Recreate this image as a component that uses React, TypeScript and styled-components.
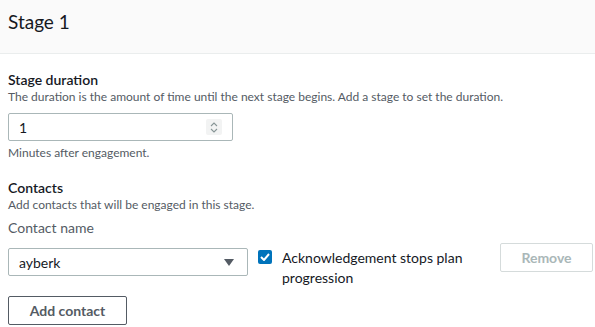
import styled, { createGlobalStyle } from 'styled-components';

const GlobalStyle = createGlobalStyle`
  html, body {
    margin: 0;
    padding: 0;
    background: #ffffff;
  }
  body {
    font-family: Lato, 'Liberation Sans', sans-serif;
    color: #16191f;
  }
`;

const Panel = styled.div`
  width: 595px;
  height: 327px;
  overflow: hidden;
  background: #ffffff;
`;

const Header = styled.div`
  height: 54px;
  box-sizing: border-box;
  padding: 11px 8px 0;
  background: #fafafa;
  border-bottom: 1px solid #eaeded;
`;

const Title = styled.h2`
  margin: 0;
  font-size: 19px;
  font-weight: 400;
  line-height: 22px;
  color: #16191f;
`;

const Body = styled.div`
  padding: 17px 8px 0;
  display: flex;
  flex-direction: column;
  align-items: flex-start;
`;

const Label = styled.div<{ $muted?: boolean }>`
  font-size: 14px;
  line-height: 18px;
  font-weight: ${(p) => (p.$muted ? 400 : 600)};
  color: ${(p) => (p.$muted ? '#545b64' : '#16191f')};
`;

const Description = styled.div`
  font-size: 12px;
  line-height: 15px;
  color: #545b64;
`;

const Field = styled.div<{ $gap?: number }>`
  margin-top: ${(p) => p.$gap ?? 0}px;
`;

const InputBox = styled.div<{ $width: number }>`
  width: ${(p) => p.$width}px;
  height: 28px;
  box-sizing: border-box;
  border: 1px solid #aab7b8;
  border-radius: 2px;
  display: flex;
  align-items: center;
  justify-content: space-between;
  padding: 0 10px;
  font-size: 14px;
  color: #16191f;
  background: #ffffff;
`;

const Stepper = styled.div`
  width: 16px;
  height: 16px;
  background: #f2f3f3;
  border-radius: 2px;
  display: flex;
  align-items: center;
  justify-content: center;
`;

const ContactRow = styled.div`
  display: flex;
  align-items: flex-start;
  align-self: stretch;
  margin-top: 11px;
`;

const CheckGroup = styled.label`
  display: flex;
  align-items: flex-start;
  gap: 10px;
  margin-left: 10px;
  width: 218px;
  font-size: 14px;
  line-height: 20px;
  color: #16191f;
`;

const Box = styled.span`
  flex: none;
  width: 14px;
  height: 14px;
  margin-top: 2px;
  border-radius: 2px;
  background: #0073bb;
  display: flex;
  align-items: center;
  justify-content: center;
`;

const Button = styled.button<{ $disabled?: boolean }>`
  height: 29px;
  box-sizing: border-box;
  padding: 0;
  white-space: nowrap;
  font-family: inherit;
  font-size: 14px;
  font-weight: 700;
  border-radius: 2px;
  background: #ffffff;
  color: ${(p) => (p.$disabled ? '#aab7b8' : '#545b64')};
  border: 1px solid ${(p) => (p.$disabled ? '#d5dbdb' : '#545b64')};
  cursor: ${(p) => (p.$disabled ? 'default' : 'pointer')};
`;

const RemoveButton = styled(Button)`
  width: 93px;
  margin-left: auto;
  margin-right: -6px;
  margin-top: -5px;
`;

const AddButton = styled(Button)`
  width: 119px;
  margin-top: 8px;
`;

export default function App() {
  return (
    <Panel>
      <GlobalStyle />
      <Header>
        <Title>Stage 1</Title>
      </Header>
      <Body>
        <Label>Stage duration</Label>
        <Description>
          The duration is the amount of time until the next stage begins. Add a
          stage to set the duration.
        </Description>
        <Field $gap={9}>
          <InputBox $width={225}>
            <span>1</span>
            <Stepper>
              <svg width="8" height="11" viewBox="0 0 8 11">
                <path
                  d="M1 4 L4 1 L7 4 M1 7 L4 10 L7 7"
                  fill="none"
                  stroke="#879596"
                  strokeWidth="1.1"
                />
              </svg>
            </Stepper>
          </InputBox>
        </Field>
        <Field $gap={4}>
          <Description>Minutes after engagement.</Description>
        </Field>
        <Field $gap={19}>
          <Label>Contacts</Label>
          <Description>Add contacts that will be engaged in this stage.</Description>
        </Field>
        <Field $gap={7}>
          <Label $muted>Contact name</Label>
        </Field>
        <ContactRow>
          <InputBox $width={240}>
            <span>ayberk</span>
            <svg width="10" height="7" viewBox="0 0 10 7" style={{ marginRight: 3 }}>
              <path d="M0 0 L10 0 L5 7 Z" fill="#545b64" />
            </svg>
          </InputBox>
          <CheckGroup>
            <Box>
              <svg width="10" height="8" viewBox="0 0 10 8">
                <path
                  d="M1 4 L4 7 L9 1"
                  fill="none"
                  stroke="#ffffff"
                  strokeWidth="2"
                />
              </svg>
            </Box>
            <span>Acknowledgement stops plan progression</span>
          </CheckGroup>
          <RemoveButton $disabled disabled>
            Remove
          </RemoveButton>
        </ContactRow>
        <AddButton>Add contact</AddButton>
      </Body>
    </Panel>
  );
}
